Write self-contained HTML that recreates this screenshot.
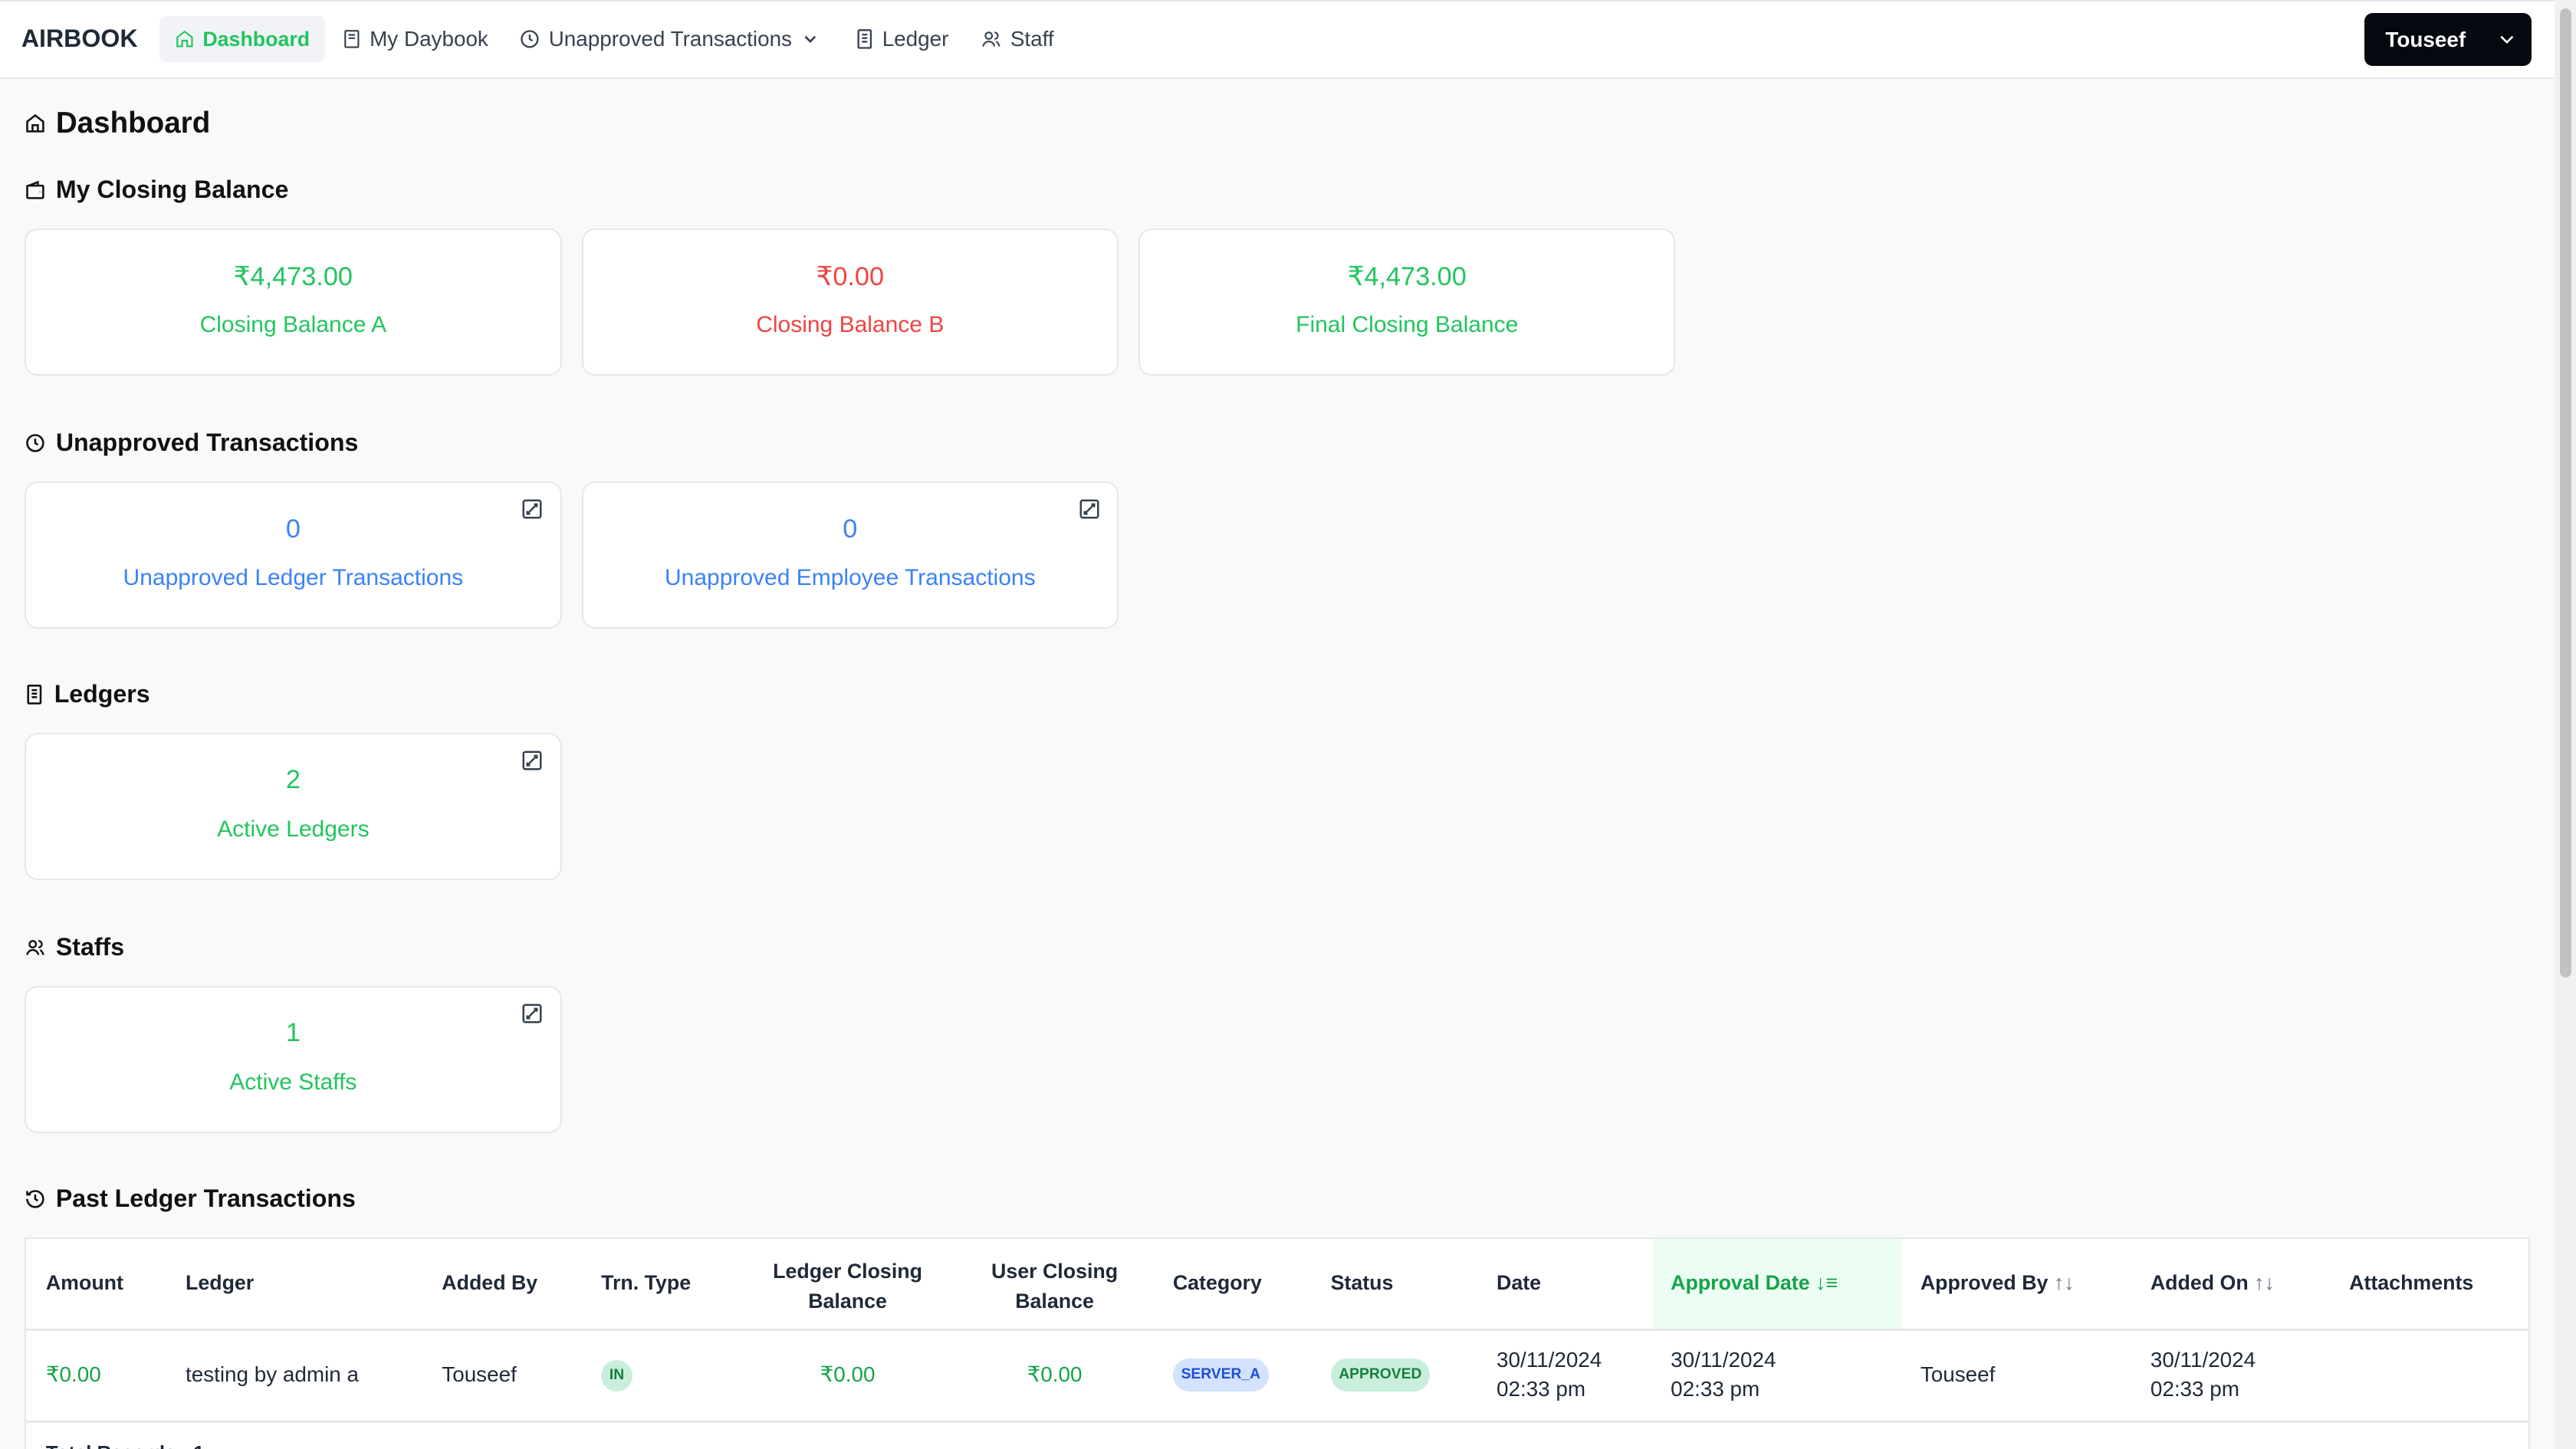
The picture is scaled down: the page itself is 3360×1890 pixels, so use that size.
<!DOCTYPE html>
<html><head><meta charset="utf-8"><style>
html,body{margin:0;padding:0;background:#f8f9fb;overflow:hidden}
#w{zoom:2.142857;width:1568px;height:882px;position:relative;font-family:"Liberation Sans",sans-serif;color:#111827;overflow:hidden}
.a{position:absolute}
.nav{left:0;top:0;width:1555px;height:46px;background:#fff;border-bottom:1px solid #e5e7eb;border-top:1px solid #e5e7eb}
.ni{position:absolute;top:9px;height:28px;line-height:28px;font-size:13px;color:#374151;display:flex;align-items:center;gap:5px}
.h{font-size:15px;font-weight:bold;color:#111;display:flex;align-items:center;gap:6px;left:15px}
.card{background:#fff;border:1px solid #e5e7eb;border-radius:8px;width:325px;height:88px;text-align:center}
.card .v{position:absolute;top:19px;width:100%;font-size:16px}
.card .l{position:absolute;top:50px;width:100%;font-size:14px}
.ex{position:absolute;right:10px;top:9px}
.g{color:#22c55e}.r{color:#ef4444}.b{color:#3b82f6}
.th{font-size:12.5px;font-weight:bold;color:#1f2937;position:absolute}
.td{font-size:13px;color:#1f2937;position:absolute;line-height:18px}
svg{display:block}
</style></head><body><div id="w">
<div class="a nav">
 <div class="a" style="left:13px;top:14px;font-size:15px;font-weight:bold;color:#1f2937">AIRBOOK</div>
 <div class="ni" style="left:97px;width:101px;background:#f1f3f7;border-radius:4px;color:#22c55e;font-weight:bold;justify-content:center;font-size:12.5px"><svg width="12" height="12" viewBox="0 0 24 24" fill="none" stroke="#22c55e" stroke-width="2"><path d="M3 10l9-7 9 7v11h-6v-7H9v7H3z"/></svg>Dashboard</div>
 <div class="ni" style="left:208px"><svg width="12" height="12" viewBox="0 0 24 24" fill="none" stroke="#374151" stroke-width="2"><rect x="4" y="2" width="16" height="20" rx="1"/><path d="M8 7h8M8 11h8"/></svg>My Daybook</div>
 <div class="ni" style="left:316px"><svg width="13" height="13" viewBox="0 0 24 24" fill="none" stroke="#374151" stroke-width="2"><circle cx="12" cy="12" r="9"/><path d="M12 7v5l3 2"/></svg>Unapproved Transactions <svg width="12" height="12" viewBox="0 0 24 24" fill="none" stroke="#374151" stroke-width="2.5"><path d="M6 9l6 6 6-6"/></svg></div>
 <div class="ni" style="left:521px"><svg width="11" height="13" viewBox="0 0 20 24" fill="none" stroke="#374151" stroke-width="2"><rect x="3" y="2" width="14" height="20" rx="1"/><path d="M7 7h6M7 11h6M7 15h6"/></svg>Ledger</div>
 <div class="ni" style="left:597px"><svg width="13" height="12" viewBox="0 0 24 24" fill="none" stroke="#374151" stroke-width="2"><circle cx="9" cy="8" r="4"/><path d="M2 21c1-4 4-6 7-6s6 2 7 6M16 4a4 4 0 010 8M18 15c2 1 3 3 4 6"/></svg>Staff</div>
 <div class="a" style="left:1439px;top:7px;width:102px;height:32px;background:#05080f;border-radius:5px;color:#fff;font-size:13px;font-weight:bold"><span class="a" style="left:13px;top:9px">Touseef</span><svg class="a" style="left:81px;top:10px" width="12" height="12" viewBox="0 0 24 24" fill="none" stroke="#fff" stroke-width="2.5"><path d="M5 9l7 7 7-7"/></svg></div>
</div>
<div class="a" style="left:1555px;top:0;width:13px;height:882px;background:#f1f1f1"></div>
<div class="a" style="left:1558px;top:5px;width:7px;height:590px;background:#c1c1c1;border-radius:4px"></div>

<div class="a h" style="top:65px;font-size:18px"><svg width="13" height="13" viewBox="0 0 24 24" fill="none" stroke="#111" stroke-width="2.2"><path d="M3 10l9-7 9 7v11H3z M9 21v-7h6v7"/></svg>Dashboard</div>

<div class="a h" style="top:107px"><svg width="13" height="13" viewBox="0 0 24 24" fill="none" stroke="#111" stroke-width="2.2"><rect x="3" y="7" width="18" height="14" rx="1"/><path d="M5 7l10-4v4M17 14h.5"/></svg>My Closing Balance</div>
<div class="a card" style="left:15px;top:139px"><div class="v g">₹4,473.00</div><div class="l g">Closing Balance A</div></div>
<div class="a card" style="left:354px;top:139px"><div class="v r">₹0.00</div><div class="l r">Closing Balance B</div></div>
<div class="a card" style="left:693px;top:139px"><div class="v g">₹4,473.00</div><div class="l g">Final Closing Balance</div></div>

<div class="a h" style="top:261px"><svg width="13" height="13" viewBox="0 0 24 24" fill="none" stroke="#111" stroke-width="2.2"><circle cx="12" cy="12" r="9"/><path d="M12 7v5l3 2"/></svg>Unapproved Transactions</div>
<div class="a card" style="left:15px;top:293px"><svg class="ex" width="14" height="14" viewBox="0 0 24 24" fill="none" stroke="#374151" stroke-width="2"><rect x="3" y="3" width="18" height="18" rx="2"/><path d="M14 7h3v3M17 7l-5 5M10 17H7v-3M7 17l5-5"/></svg><div class="v b">0</div><div class="l b">Unapproved Ledger Transactions</div></div>
<div class="a card" style="left:354px;top:293px"><svg class="ex" width="14" height="14" viewBox="0 0 24 24" fill="none" stroke="#374151" stroke-width="2"><rect x="3" y="3" width="18" height="18" rx="2"/><path d="M14 7h3v3M17 7l-5 5M10 17H7v-3M7 17l5-5"/></svg><div class="v b">0</div><div class="l b">Unapproved Employee Transactions</div></div>

<div class="a h" style="top:414px"><svg width="12" height="13" viewBox="0 0 20 24" fill="none" stroke="#111" stroke-width="2.2"><rect x="3" y="2" width="14" height="20" rx="1"/><path d="M7 7h6M7 11h6M7 15h6"/></svg>Ledgers</div>
<div class="a card" style="left:15px;top:446px"><svg class="ex" width="14" height="14" viewBox="0 0 24 24" fill="none" stroke="#374151" stroke-width="2"><rect x="3" y="3" width="18" height="18" rx="2"/><path d="M14 7h3v3M17 7l-5 5M10 17H7v-3M7 17l5-5"/></svg><div class="v g">2</div><div class="l g">Active Ledgers</div></div>

<div class="a h" style="top:568px"><svg width="13" height="12" viewBox="0 0 24 24" fill="none" stroke="#111" stroke-width="2.2"><circle cx="9" cy="8" r="4"/><path d="M2 21c1-4 4-6 7-6s6 2 7 6M16 4a4 4 0 010 8M18 15c2 1 3 3 4 6"/></svg>Staffs</div>
<div class="a card" style="left:15px;top:600px"><svg class="ex" width="14" height="14" viewBox="0 0 24 24" fill="none" stroke="#374151" stroke-width="2"><rect x="3" y="3" width="18" height="18" rx="2"/><path d="M14 7h3v3M17 7l-5 5M10 17H7v-3M7 17l5-5"/></svg><div class="v g">1</div><div class="l g">Active Staffs</div></div>

<div class="a h" style="top:721px"><svg width="13" height="13" viewBox="0 0 24 24" fill="none" stroke="#111" stroke-width="2.2"><path d="M3 12a9 9 0 109-9 9 9 0 00-7 3.5M3 3v4h4M12 7v5l3 2"/></svg>Past Ledger Transactions</div>

<div class="a" style="left:15px;top:753px;width:1523px;height:140px;background:#fff;border:1px solid #e5e7eb">
 <div class="a" style="left:990px;top:0;width:151px;height:55px;background:#ecfdf3"></div>
 <div class="a" style="left:0;top:55px;width:1523px;height:1px;background:#e5e7eb"></div>
 <div class="a" style="left:0;top:111px;width:1523px;height:1px;background:#e5e7eb"></div>
 <div class="th" style="left:12px;top:20px">Amount</div>
 <div class="th" style="left:97px;top:20px">Ledger</div>
 <div class="th" style="left:253px;top:20px">Added By</div>
 <div class="th" style="left:350px;top:20px">Trn. Type</div>
 <div class="th" style="left:440px;top:11px;width:120px;text-align:center;line-height:18px">Ledger Closing<br>Balance</div>
 <div class="th" style="left:576px;top:11px;width:100px;text-align:center;line-height:18px">User Closing<br>Balance</div>
 <div class="th" style="left:698px;top:20px">Category</div>
 <div class="th" style="left:794px;top:20px">Status</div>
 <div class="th" style="left:895px;top:20px">Date</div>
 <div class="th" style="left:1001px;top:20px;color:#16a34a">Approval Date <span style="font-weight:normal">↓≡</span></div>
 <div class="th" style="left:1153px;top:20px">Approved By <span style="color:#6b7280;font-weight:normal">↑↓</span></div>
 <div class="th" style="left:1293px;top:20px">Added On <span style="color:#6b7280;font-weight:normal">↑↓</span></div>
 <div class="th" style="left:1414px;top:20px">Attachments</div>

 <div class="td g" style="left:12px;top:74px;color:#16a34a">₹0.00</div>
 <div class="td" style="left:97px;top:74px">testing by admin a</div>
 <div class="td" style="left:253px;top:74px">Touseef</div>
 <div class="td" style="left:350px;top:74px;width:19px;height:19px;border-radius:10px;background:#c9eedc;color:#15803d;font-size:9px;font-weight:bold;text-align:center;line-height:19px">IN</div>
 <div class="td" style="left:440px;top:74px;width:120px;text-align:center;color:#16a34a">₹0.00</div>
 <div class="td" style="left:576px;top:74px;width:100px;text-align:center;color:#16a34a">₹0.00</div>
 <div class="td" style="left:698px;top:73px;padding:0 5px;height:20px;border-radius:10px;background:#d3e3fd;color:#1d4ed8;font-size:9px;font-weight:bold;line-height:20px">SERVER_A</div>
 <div class="td" style="left:794px;top:73px;padding:0 5px;height:20px;border-radius:10px;background:#c9eedc;color:#15803d;font-size:9px;font-weight:bold;line-height:20px">APPROVED</div>
 <div class="td" style="left:895px;top:65px">30/11/2024<br>02:33 pm</div>
 <div class="td" style="left:1001px;top:65px">30/11/2024<br>02:33 pm</div>
 <div class="td" style="left:1153px;top:74px">Touseef</div>
 <div class="td" style="left:1293px;top:65px">30/11/2024<br>02:33 pm</div>
 <div class="td" style="left:12px;top:122px;font-weight:bold;font-size:12px">Total Records : 1</div>
</div>
</div></body></html>
